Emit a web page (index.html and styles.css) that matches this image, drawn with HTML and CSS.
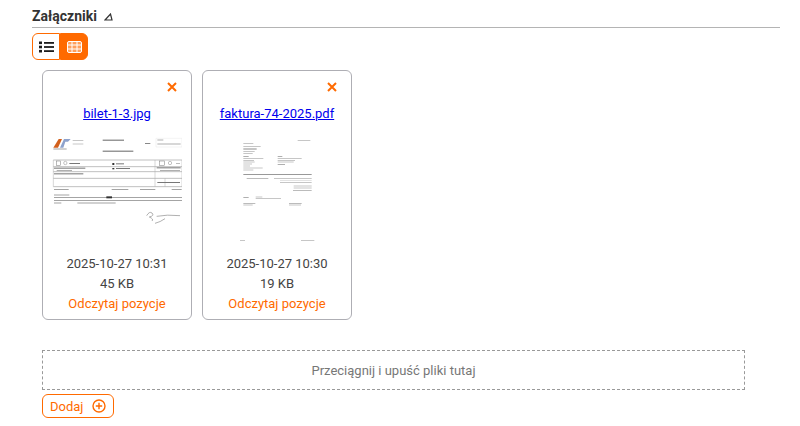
FILE: index.html
```html
<!DOCTYPE html>
<html lang="en">
<head>
    <meta charset="UTF-8">
    <title>Załączniki</title>
    <link rel="stylesheet" href="styles.css">
</head>
<body>

<div class="section">
    <div class="section-title">
        <h2>Załączniki</h2>
        <svg class="title-icon" width="9" height="8" viewBox="0 0 9 8"><path d="M1 7 L6.5 1 L8 7 Z" fill="none" stroke="#333" stroke-width="1.2"/></svg>
    </div>

    <div class="toggle">
        <button class="toggle-btn">
            <svg width="15" height="12" viewBox="0 0 15 12"><g fill="#1c1c1c"><rect x="0" y="0.5" width="3" height="2.6"/><rect x="0" y="4.7" width="3" height="2.6"/><rect x="0" y="8.9" width="3" height="2.6"/><rect x="5" y="1" width="10" height="1.8"/><rect x="5" y="5.1" width="10" height="1.8"/><rect x="5" y="9.2" width="10" height="1.8"/></g></svg>
        </button>
        <button class="toggle-btn active">
            <svg width="15" height="12" viewBox="0 0 15 12"><rect x="0.5" y="0.5" width="14" height="11" rx="1.5" fill="#ff9f5c" stroke="#fff"/><path d="M0 4H15M0 8H15M5 0V12M10 0V12" stroke="#fff" fill="none"/></svg>
        </button>
    </div>

    <div class="files">
        <div class="file-card">
            <svg class="remove" width="10" height="10" viewBox="0 0 10 10"><path d="M1 1L9 9M9 1L1 9" stroke="#ff6a00" stroke-width="2" fill="none"/></svg>
            <a class="file-name" href="#">bilet-1-3.jpg</a>
            <svg class="thumb" width="130" height="110" viewBox="36 18 390 330">
                <defs><filter id="soft1"><feGaussianBlur stdDeviation="1.1"/></filter></defs>
                <g filter="url(#soft1)" fill="#777">
                    <path d="M40 68 L56 42 H66 L54 68Z" fill="#d2601f"/>
                    <path d="M60 68 L72 42 H92 L84 50 H76 L70 68Z" fill="#8ea2cc"/>
                    <rect x="98" y="45" width="32" height="2" fill="#aaa"/>
                    <rect x="98" y="56" width="32" height="2" fill="#aaa"/>
                    <rect x="40" y="71" width="40" height="2"/>
                    <rect x="188" y="44" width="64" height="3" fill="#666"/>
                    <rect x="188" y="77" width="92" height="3" fill="#666"/>
                    <rect x="315" y="54" width="16" height="3" fill="#888"/>
                    <path d="M348 40H426M348 66H426M348 40V66M426 40V66" stroke="#ddd" stroke-width="1" fill="none"/>
                    <rect x="352" y="44" width="18" height="2" fill="#888"/>
                    <rect x="352" y="56" width="70" height="2" fill="#888"/>
                    <path d="M40 105H426M40 125H426M40 140H426M40 160H426M40 185H426" stroke="#888" stroke-width="1.6" fill="none"/>
                    <path d="M40 105V185M426 105V185M345 105V185M375 160V185" stroke="#aaa" stroke-width="1.4" fill="none"/>
                    <rect x="50" y="108" width="12" height="13" fill="none" stroke="#777" stroke-width="1.5"/>
                    <circle cx="76" cy="114" r="5" fill="none" stroke="#888" stroke-width="1.5"/>
                    <rect x="88" y="114" width="32" height="3"/>
                    <rect x="217" y="114" width="6" height="6" fill="#333"/>
                    <rect x="228" y="115" width="24" height="3"/>
                    <rect x="358" y="108" width="15" height="13" fill="none" stroke="#777" stroke-width="1.5"/>
                    <circle cx="390" cy="114" r="5" fill="none" stroke="#888" stroke-width="1.5"/>
                    <rect x="408" y="115" width="12" height="2" fill="#999"/>
                    <rect x="42" y="128" width="94" height="3"/>
                    <rect x="217" y="129" width="6" height="4" fill="#333"/>
                    <rect x="228" y="129" width="42" height="3"/>
                    <rect x="350" y="127" width="72" height="3"/>
                    <rect x="50" y="135" width="46" height="2" fill="#888"/>
                    <rect x="360" y="135" width="60" height="2" fill="#888"/>
                    <rect x="42" y="145" width="88" height="3"/>
                    <rect x="352" y="171" width="68" height="3"/>
                    <rect x="42" y="192" width="44" height="2"/>
                    <rect x="215" y="192" width="50" height="2"/>
                    <rect x="300" y="192" width="46" height="2"/>
                    <rect x="395" y="192" width="30" height="2"/>
                    <rect x="42" y="209" width="46" height="2"/>
                    <rect x="42" y="217" width="384" height="2"/>
                    <rect x="199" y="214" width="17" height="6" fill="#333"/>
                    <rect x="42" y="225" width="384" height="2"/>
                    <rect x="42" y="233" width="22" height="2"/>
                    <rect x="112" y="233" width="115" height="2"/>
                    <path d="M320 272 q8 -14 16 -8 q8 8 -8 12 q14 6 8 12 M350 274 q30 -6 70 -2 M345 295 q16 -4 30 -14" stroke="#888" stroke-width="2" fill="none"/>
                </g>
            </svg>
            <div class="file-date">2025-10-27 10:31</div>
            <div class="file-size">45 KB</div>
            <a class="file-action" href="#">Odczytaj pozycje</a>
        </div>

        <div class="file-card">
            <svg class="remove" width="10" height="10" viewBox="0 0 10 10"><path d="M1 1L9 9M9 1L1 9" stroke="#ff6a00" stroke-width="2" fill="none"/></svg>
            <a class="file-name" href="#">faktura-74-2025.pdf</a>
            <svg class="thumb" width="130" height="110" viewBox="21 18 390 330">
                <defs><filter id="soft2"><feGaussianBlur stdDeviation="1"/></filter></defs>
                <g filter="url(#soft2)" fill="#aaa">
                    <rect x="278" y="45" width="38" height="2"/>
                    <rect x="115" y="54" width="30" height="2"/>
                    <rect x="115" y="63" width="52" height="2"/>
                    <rect x="115" y="69" width="40" height="2"/>
                    <rect x="115" y="73" width="40" height="2"/>
                    <rect x="115" y="78" width="34" height="2"/>
                    <rect x="115" y="85" width="28" height="2"/>
                    <rect x="115" y="94" width="16" height="2" fill="#888"/>
                    <rect x="218" y="94" width="14" height="2" fill="#888"/>
                    <rect x="115" y="100" width="60" height="2"/>
                    <rect x="218" y="100" width="72" height="2"/>
                    <rect x="115" y="105" width="32" height="2"/>
                    <rect x="218" y="105" width="52" height="2"/>
                    <rect x="115" y="110" width="34" height="2"/>
                    <rect x="218" y="110" width="48" height="2"/>
                    <rect x="115" y="116" width="26" height="2"/>
                    <rect x="218" y="118" width="22" height="2" fill="#888"/>
                    <rect x="115" y="122" width="20" height="2"/>
                    <rect x="115" y="128" width="58" height="2"/>
                    <rect x="115" y="134" width="30" height="2"/>
                    <rect x="115" y="147" width="205" height="3" fill="#999"/>
                    <rect x="125" y="160" width="65" height="2" fill="#999"/>
                    <rect x="207" y="160" width="113" height="2"/>
                    <rect x="225" y="166" width="95" height="1"/>
                    <rect x="225" y="172" width="95" height="2"/>
                    <rect x="266" y="182" width="54" height="2"/>
                    <rect x="266" y="188" width="54" height="2"/>
                    <rect x="264" y="195" width="56" height="2" fill="#999"/>
                    <rect x="115" y="216" width="16" height="2" fill="#888"/>
                    <rect x="152" y="215" width="20" height="2"/>
                    <rect x="152" y="219" width="76" height="2"/>
                    <rect x="115" y="234" width="36" height="2" fill="#999"/>
                    <rect x="252" y="234" width="38" height="2" fill="#999"/>
                    <rect x="115" y="239" width="28" height="2"/>
                    <rect x="252" y="239" width="36" height="2"/>
                    <rect x="105" y="345" width="15" height="2"/>
                    <rect x="288" y="345" width="40" height="2"/>
                </g>
            </svg>
            <div class="file-date">2025-10-27 10:30</div>
            <div class="file-size">19 KB</div>
            <a class="file-action" href="#">Odczytaj pozycje</a>
        </div>
    </div>

    <div class="dropzone">Przeciągnij i upuść pliki tutaj</div>

    <button class="add-btn">
        Dodaj
        <svg width="14" height="14" viewBox="0 0 14 14"><circle cx="7" cy="7" r="6" fill="none" stroke="#ff6a00" stroke-width="1.4"/><path d="M3.8 7H10.2M7 3.8V10.2" stroke="#ff6a00" stroke-width="1.4" fill="none"/></svg>
    </button>
</div>

</body>
</html>
```

FILE: styles.css
```css
body {
    margin: 0;
    font-family: Roboto, sans-serif;
    font-size: 13px;
    color: #444;
    background: #fff;
}
.section {
    padding: 6px 20px 0 32px;
}
.section-title {
    display: flex;
    align-items: center;
    gap: 7px;
    height: 20px;
    padding-bottom: 1px;
    border-bottom: 1px solid #b4b4b4;
}
.section-title h2 {
    margin: 0;
    font-size: 14px;
    font-weight: 700;
    color: #333;
}
.title-icon {
    margin-top: 2px;
}
.toggle {
    display: flex;
    width: 56px;
    height: 27px;
    margin-top: 5px;
}
.toggle-btn {
    flex: 1;
    padding: 0;
    display: flex;
    align-items: center;
    justify-content: center;
    background: #fff;
    border: 1px solid #ff6a00;
    border-radius: 6px 0 0 6px;
}
.toggle-btn.active {
    background: #ff6a00;
    border-radius: 0 6px 6px 0;
}
.files {
    display: flex;
    gap: 10px;
    margin: 10px 0 0 10px;
}
.file-card {
    position: relative;
    box-sizing: border-box;
    width: 150px;
    height: 250px;
    padding-top: 35px;
    display: flex;
    flex-direction: column;
    align-items: center;
    border: 1px solid #aeaeb4;
    border-radius: 6px;
    text-align: center;
}
.remove {
    position: absolute;
    top: 11px;
    right: 14px;
}
.file-name {
    color: #0000ee;
    line-height: 16px;
}
.thumb {
    display: block;
    margin: 9px 0 13px;
}
.file-date {
    line-height: 20px;
    height: 20px;
}
.file-size {
    line-height: 20px;
    height: 20px;
}
.file-action {
    line-height: 20px;
    color: #ff6a00;
    text-decoration: none;
}
.dropzone {
    box-sizing: border-box;
    width: 703px;
    height: 40px;
    margin: 30px 0 0 10px;
    display: flex;
    align-items: center;
    justify-content: center;
    border: 1px dashed #999;
    color: #777;
    font-size: 13px;
}
.add-btn {
    box-sizing: border-box;
    display: flex;
    align-items: center;
    gap: 9px;
    width: 72px;
    height: 24px;
    margin: 4px 0 0 10px;
    padding: 0 0 0 7px;
    background: #fff;
    border: 1px solid #ff6a00;
    border-radius: 6px;
    color: #ff6a00;
    font-family: Roboto, sans-serif;
    font-size: 13px;
}
```
